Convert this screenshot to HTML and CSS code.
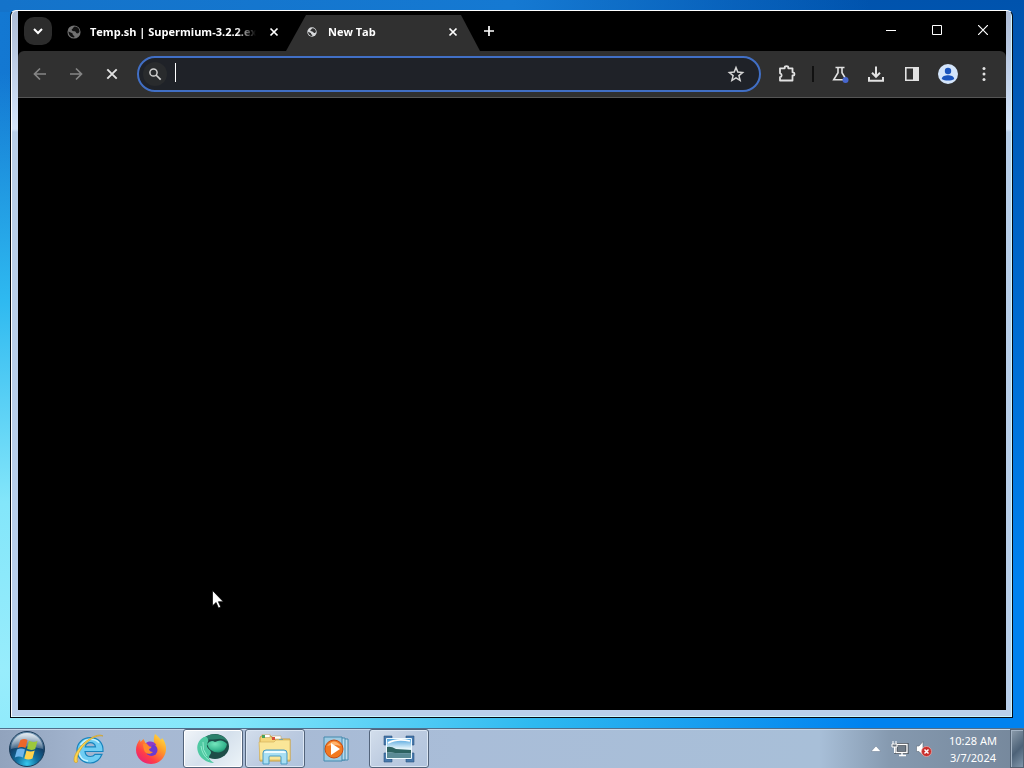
FILE: index.html
```html
<!DOCTYPE html>
<html lang="en">
<head>
  <meta charset="UTF-8">
  <meta name="viewport" content="width=device-width, initial-scale=1.0">
  <title>New Tab</title>
  <link rel="stylesheet" href="styles.css">
</head>
<body>
<main class="desktop">
  <div class="window">
    <div class="browser">
      <!-- Tab strip -->
      <header class="titlebar">
        <button class="tab-search" aria-label="Search tabs">
          <svg width="12" height="12" viewBox="0 0 12 12"><path d="M2 4 6 8 10 4" fill="none" stroke="#fff" stroke-width="2"/></svg>
        </button>
        <div class="tab">
          <svg class="globe dim" width="14" height="14" viewBox="0 0 16 16"><circle cx="8" cy="8" r="7.500" fill="currentColor"/><path d="M9 1.800C7 2 7.500 4 6 4.500S5.500 7 8 7s2 2 3.500 2.500S14 8 14.300 7C14 4 12 2 9 1.800zM1.700 7.500 6 9.500c1 .5 0 2 1.500 2.500S8.500 14 8 14.300C4.500 14.200 1.800 11.500 1.700 7.500z" fill="#111"/></svg>
          <span class="tab-title">Temp.sh | Supermium-3.2.2.exe</span>
          <button class="tab-close" aria-label="Close tab"><svg width="10" height="10" viewBox="0 0 10 10"><path d="M1.500 1.500l7 7M8.500 1.500l-7 7" stroke="#fff" stroke-width="1.700"/></svg></button>
        </div>
        <div class="tab active">
          <svg class="globe small" width="10" height="10" viewBox="0 0 16 16"><circle cx="8" cy="8" r="7.500" fill="currentColor"/><path d="M9 1.800C7 2 7.500 4 6 4.500S5.500 7 8 7s2 2 3.500 2.500S14 8 14.300 7C14 4 12 2 9 1.800zM1.700 7.500 6 9.500c1 .5 0 2 1.500 2.500S8.500 14 8 14.300C4.500 14.200 1.800 11.500 1.700 7.500z" fill="#303030"/></svg>
          <span class="tab-title">New Tab</span>
          <button class="tab-close" aria-label="Close tab"><svg width="10" height="10" viewBox="0 0 10 10"><path d="M1.500 1.500l7 7M8.500 1.500l-7 7" stroke="#fff" stroke-width="1.700"/></svg></button>
        </div>
        <button class="new-tab" aria-label="New tab"><svg width="12" height="12" viewBox="0 0 12 12"><path d="M6 1v10M1 6h10" stroke="#fff" stroke-width="1.700"/></svg></button>
        <div class="window-controls">
          <button aria-label="Minimize"><svg width="10" height="11" viewBox="0 0 10 11"><path d="M0 5.500h10" stroke="#fff"/></svg></button>
          <button aria-label="Maximize"><svg width="10" height="10" viewBox="0 0 10 10"><path d="M.5.500h9v9h-9z" fill="none" stroke="#fff"/></svg></button>
          <button aria-label="Close"><svg width="10" height="10" viewBox="0 0 10 10"><path d="M0 0l10 10M10 0 0 10" stroke="#fff" stroke-width="1.200"/></svg></button>
        </div>
      </header>
      <!-- Toolbar -->
      <nav class="toolbar">
        <button class="tool dim" aria-label="Back"><svg width="16" height="16" viewBox="0 0 16 16"><path d="M14 8H3M8 2.500 2.500 8 8 13.500" fill="none" stroke="currentColor" stroke-width="1.700"/></svg></button>
        <button class="tool dim" aria-label="Forward"><svg width="16" height="16" viewBox="0 0 16 16"><path d="M2 8h11M8 2.500 13.500 8 8 13.500" fill="none" stroke="currentColor" stroke-width="1.700"/></svg></button>
        <button class="tool" aria-label="Stop"><svg width="16" height="16" viewBox="0 0 16 16"><path d="M3.300 3.300l9.400 9.400M12.700 3.300l-9.400 9.400" stroke="currentColor" stroke-width="1.900"/></svg></button>
        <div class="omnibox">
          <span class="search-chip"><svg width="14" height="14" viewBox="0 0 14 14"><circle cx="5.500" cy="5.500" r="3.600" fill="none" stroke="#d0d0d0" stroke-width="1.500"/><path d="M8 8l4.700 4.700" stroke="#d0d0d0" stroke-width="1.700"/></svg></span>
          <span class="caret"></span>
          <input class="address" type="text" aria-label="Address and search bar">
          <button class="star" aria-label="Bookmark this tab"><svg width="18" height="18" viewBox="0 0 18 18"><path d="M9 2.600l1.800 4.500 4.800.4-3.700 3.100 1.200 4.700L9 12.800l-4.100 2.500 1.200-4.700-3.700-3.100 4.800-.4z" fill="none" stroke="#d6d6d6" stroke-width="1.500"/></svg></button>
        </div>
        <button class="tool" aria-label="Extensions"><svg width="20" height="20" viewBox="0 0 20 20"><path d="M3 4.300h4.700v-.8a1.800 1.300 0 0 1 3.600 0v.8h4.200v4h.5a1.500 1.600 0 0 1 0 3.200h-.5v5H3v-3.300c2.200-.4 2.200-3.500 0-3.900z" fill="none" stroke="currentColor" stroke-width="1.800" stroke-linejoin="round"/></svg></button>
        <span class="divider"></span>
        <button class="tool" aria-label="Experiments"><svg width="20" height="20" viewBox="0 0 20 20"><path d="M5.500 3.500h9M8 3.500v5.200L3.700 15.800h12.600L12 8.700V3.500" fill="none" stroke="currentColor" stroke-width="1.600"/><circle cx="15.500" cy="16" r="3" fill="#4767cf"/></svg></button>
        <button class="tool" aria-label="Downloads"><svg width="18" height="18" viewBox="0 0 18 18"><path d="M9 1.500v10M5 7.800l4 4 4-4M2 12v3.800h14V12" fill="none" stroke="currentColor" stroke-width="2"/></svg></button>
        <button class="tool" aria-label="Side panel"><svg width="16" height="16" viewBox="0 0 16 16"><path d="M1.800 1.800h12.400v12.400H1.800z" fill="none" stroke="currentColor" stroke-width="1.600"/><path d="M9 1.500h5.500v13H9z" fill="currentColor"/></svg></button>
        <button class="tool" aria-label="Profile"><svg width="20" height="20" viewBox="0 0 20 20"><circle cx="10" cy="10" r="10" fill="#d4e5fb"/><circle cx="10" cy="7" r="3.200" fill="#1b55bd"/><path d="M3.800 15c0-3 3.700-3.800 6.200-3.800s6.200.8 6.200 3.800c-3 2-9.400 2-12.400 0z" fill="#1b55bd"/></svg></button>
        <button class="tool" aria-label="Menu"><svg width="16" height="16" viewBox="0 0 16 16"><g fill="currentColor"><circle cx="8" cy="2.500" r="1.500"/><circle cx="8" cy="8" r="1.500"/><circle cx="8" cy="13.500" r="1.500"/></g></svg></button>
      </nav>
      <div class="page"></div>
    </div>
  </div>
  <svg class="cursor" width="12" height="19" viewBox="0 0 12 19"><path d="M.5.500v15.300l3.600-3.300 2.400 5.600 2.300-1-2.400-5.400h4.900z" fill="#fff" stroke="#000" stroke-width=".7"/></svg>
</main>

<footer class="taskbar">
  <button class="start" aria-label="Start">
    <svg width="38" height="38" viewBox="0 0 38 38">
      <defs>
        <radialGradient id="orb" cx=".5" cy=".92" r=".85"><stop offset="0" stop-color="#35c8ee"/><stop offset=".35" stop-color="#12709f"/><stop offset=".7" stop-color="#123f68"/><stop offset="1" stop-color="#7296b4"/></radialGradient>
        <linearGradient id="gloss" x2="0" y2="1"><stop offset="0" stop-color="#fff" stop-opacity=".8"/><stop offset="1" stop-color="#fff" stop-opacity=".2"/></linearGradient>
      </defs>
      <circle cx="19" cy="19" r="17.500" fill="url(#orb)" stroke="#1b3c59"/>
      <path d="M3 19a16 16 0 0 1 32 0q-16-5-32 0z" fill="url(#gloss)"/>
      <path d="M12.500 10q4-2 7 0l-2 8q-4-2-8 0z" fill="#ed672a"/>
      <path d="M21 10.800q4 2.200 8.500.2l-2.300 8q-4 2-8.200-.2z" fill="#9cc83c"/>
      <path d="M9 19.600q4-2 8 0l-2.200 8q-3.500-2-8-.2z" fill="#6eb5eb"/>
      <path d="M18.500 20.400q4 2.200 8.200.2l-2.200 8q-4.500 2-8.200-.2z" fill="#ffd34c"/>
    </svg>
  </button>
  <button class="task" aria-label="Internet Explorer">
    <svg width="32" height="32" viewBox="0 0 32 32">
      <path d="M30 18.500H12c.3 3.400 2.500 5 5.300 5 2 0 3.700-.8 4.700-2.200h7C27 26.500 22.500 30 17.200 30 10 30 4 24.800 4 17.300S10 4.700 17.300 4.700C25.500 4.700 30.500 10 30 18.500zM22.500 13.800c-.5-2.500-2.400-4.100-5-4.100s-4.700 1.600-5.200 4.100z" fill="#6fcdf3" stroke="#1784be" stroke-width="1.200"/>
      <path d="M7.500 12q4-5.500 10-5.700 5-.2 8.500 3.500M6 19q1 8 9 9" stroke="#c5f2ff" fill="none" stroke-width="1.500"/>
      <path d="M1.500 29C-1 24.500 6 12 17 5.500 22 2.500 27 1 30 3c-5-.8-9 1.200-13 4C9 12.500 2.500 23 4.500 29q-1.600 1.200-3 0z" fill="#ffd44c" stroke="#cb9b21" stroke-width=".6"/>
    </svg>
  </button>
  <button class="task" aria-label="Firefox">
    <svg width="32" height="32" viewBox="0 0 32 32">
      <defs><linearGradient id="fox" x1="1" y1="0" x2=".2" y2="1"><stop offset="0" stop-color="#fff04a"/><stop offset=".4" stop-color="#ff9c28"/><stop offset=".75" stop-color="#ff3d48"/><stop offset="1" stop-color="#e5207e"/></linearGradient></defs>
      <path d="M20 1c4 3 5 5 6 6l1-2c3 3 4.500 8 4 12-.8 8-7 14-15 14S1 25 1 17c0-4 1.500-8 4-10.500L5.500 9l3-3 2 4h5l4 2c-1-4-1-8 .5-11z" fill="url(#fox)"/>
      <circle cx="16.500" cy="17" r="6" fill="#6b3ad2"/>
      <path d="M8 11c3-1 6 0 8 2 1 1 0 2.500-2 3 0 2 2 3 4 3-3 3-8 2-9-2-.5-2-1-4-1-6z" fill="#ff8a2b"/>
      <path d="M11 10c4-3 9-1 10.500 2.500-2-.8-4-.5-5 .5s-2 1-3.500-1z" fill="#8f3bc6"/>
    </svg>
  </button>
  <button class="task open focused" aria-label="Supermium">
    <svg width="34" height="34" viewBox="0 0 34 34">
      <defs><radialGradient id="sup" cx=".4" cy=".3" r=".75"><stop offset="0" stop-color="#75e6bd"/><stop offset=".7" stop-color="#35b68e"/><stop offset="1" stop-color="#1d8a6b"/></radialGradient></defs>
      <ellipse cx="19" cy="14.500" rx="14" ry="12.500" fill="#1d4d48"/>
      <path d="M5 8C13-1 28 1 32 10q-5-4-10-3C15 8 9 7 5 8z" fill="#2b806b"/>
      <path d="M11 12q4-5 8-2 7-4 12 2-1 7-8 8.500Q14 21 11 12z" fill="url(#sup)"/>
      <path d="M8 5C2 8 0 14 2 20c2 6 8 10.500 16 11-3-2-5-3.500-5-6 0-2 2-2.500 2-4.500 0-3-5-4-4-8 .6-2.500 2-3.500 1-5.500Q11 4 8 5z" fill="#4fc9a2"/>
      <path d="M5 14q1 9 8 14M7 10q-1 8 4 14" fill="none" stroke="#a4f2d8" stroke-width=".8"/>
    </svg>
  </button>
  <button class="task open" aria-label="Windows Explorer">
    <svg width="34" height="32" viewBox="0 0 34 32">
      <path d="M2 5q0-2 2-2h9l2 3h17v22H2z" fill="#f4d67b" stroke="#c99f43"/>
      <path d="M4 1.500h8v3H4zM14 3h9v3h-9z" fill="#fff" stroke="#b99b55" stroke-width=".5"/>
      <path d="M4 2h3v3H4z" fill="#49a35b"/><path d="M14 4h3v3h-3z" fill="#d6503b"/><path d="M21 6h4v3h-4z" fill="#4b9dc9"/>
      <path d="M1 9h15l2-2h14v20H2z" fill="#fae698" stroke="#d4b25b" stroke-width=".7"/>
      <path d="M5 31V20q0-3 3-3h18q3 0 3 3v11h-6v-7q0-1-1-1H12q-1 0-1 1v7z" fill="#a9dff3" stroke="#499bc3"/>
      <path d="M7 20q0-1 1.500-1h17q1.500 0 1.500 1" fill="none" stroke="#effcff" stroke-width="2"/>
    </svg>
  </button>
  <button class="task" aria-label="Windows Media Player">
    <svg width="32" height="28" viewBox="0 0 32 28">
      <path d="M9 4h18v21H9z" fill="#c3deee" stroke="#4589ad"/>
      <path d="M6 3h18v22H6z" fill="#b6dbef" stroke="#4589ad"/>
      <path d="M3 2h18v24H3z" fill="#9dcbe3" stroke="#4589ad"/>
      <circle cx="13" cy="14" r="9" fill="#f27920" stroke="#c94b10"/>
      <path d="M6 11q7-9 14 0-7-2-14 0z" fill="#ffb36e"/>
      <path d="M10 8v12l9-6z" fill="#fff"/>
    </svg>
  </button>
  <button class="task open" aria-label="Photo Viewer">
    <svg width="32" height="28" viewBox="0 0 32 28">
      <defs><linearGradient id="sky" x2="0" y2="1"><stop offset="0" stop-color="#489fdb"/><stop offset=".5" stop-color="#e3f4fb"/><stop offset="1" stop-color="#8bbbd2"/></linearGradient></defs>
      <path d="M1 1h8v3H4v6H1zM23 1h8v9h-3V4h-5zM1 18h3v6h5v3H1zM28 18h3v9h-8v-3h5z" fill="#4778ac" stroke="#2d547f" stroke-width=".6"/>
      <path d="M3.500 3.500h25v20h-25z" fill="url(#sky)" stroke="#eefaff"/>
      <path d="M4 12q4-1 9 2l15 1v3q-12 1-24-1z" fill="#2d6261"/>
      <path d="M4 17q12 2 24 1v5H4z" fill="#5b8b96"/>
      <path d="M5 8q9-5 22-2" fill="none" stroke="#fff" stroke-width="1.500"/>
    </svg>
  </button>
  <div class="tray">
    <button aria-label="Show hidden icons"><svg width="10" height="6" viewBox="0 0 10 6"><path d="M5 0l5 5.500H0z" fill="#fff" stroke="#65778e" stroke-width=".5"/></svg></button>
    <button aria-label="Network">
      <svg width="18" height="18" viewBox="0 0 18 18"><path d="M5 4.500h11v8H5z" fill="#707c89" stroke="#3c454f" stroke-width="3"/><path d="M5 4.500h11v8H5zM8 15.500h7M11 13v2" fill="none" stroke="#fff" stroke-width="1.400"/><path d="M2 1v3M5 1v3M1 4h5v3H1zM3.500 7v6" fill="#68727d" stroke="#fff"/></svg>
    </button>
    <button aria-label="Volume muted">
      <svg width="18" height="18" viewBox="0 0 18 18"><path d="M1.500 6H4l4-4.500v14L4 11.500H1.500z" fill="#fff" stroke="#5e6c7b" stroke-width=".6"/><circle cx="11.500" cy="11.500" r="5" fill="#c92e2b" stroke="#f0aaa7" stroke-width=".7"/><path d="M9.500 9.500l4 4M13.500 9.500l-4 4" stroke="#fff" stroke-width="1.500"/></svg>
    </button>
  </div>
  <time class="clock" datetime="2024-03-07T10:28"><span>10:28 AM</span><span>3/7/2024</span></time>
  <button class="show-desktop" aria-label="Show desktop"></button>
</footer>
</body>
</html>
```
FILE: styles.css
```css
* { box-sizing: border-box; }
body {
  margin: 0;
  height: 100vh;
  display: flex;
  flex-direction: column;
  overflow: hidden;
  font-family: "Noto Sans", "Open Sans", sans-serif;
  font-size: 12px;
}
button {
  display: flex;
  align-items: center;
  justify-content: center;
  padding: 0;
  border: 0;
  background: none;
  color: inherit;
}
.desktop {
  position: relative;
  flex: 1;
  min-height: 0;
  display: flex;
  padding: 10px 11px 10px 10px;
  background:
    radial-gradient(ellipse 85% 82% at 0 92%, #98edfc 0, #83e6fa 28%, #2eb9f0 62%, transparent 100%),
    linear-gradient(90deg, #1473ca 0, #1579d2 50%, transparent 85%) top / 100% 12px no-repeat,
    linear-gradient(90deg, #1378d2, transparent 60%),
    linear-gradient(#0053ad, #0069cd 40%, #0082ef 80%);
}
.window {
  flex: 1;
  display: flex;
  padding: 0 6px 7px;
  border: 1px solid #050b14;
  border-top-color: #fff;
  border-radius: 6px 6px 0 0;
  box-shadow: inset 1px 0 #fff, inset -1px -1px #c9f4ff;
  background: linear-gradient(#adbcd6 0, #d3e4fa 118px, #b8cfea 121px, #b9cfeb 100%);
}
.browser {
  flex: 1;
  min-width: 0;
  display: flex;
  flex-direction: column;
  margin-left: 1px;
  background: #000;
}

/* tab strip */
.titlebar {
  display: flex;
  align-items: center;
  height: 40px;
  padding-left: 6px;
  color: #fff;
}
.tab-search {
  width: 28px;
  height: 28px;
  border-radius: 10px;
  background: #2c2c2c;
}
.tab {
  display: flex;
  align-items: center;
  width: 234px;
  height: 36px;
  padding: 0 3px 3px 15px;
  align-self: flex-end;
}
.tab.active {
  width: 194px;
  padding: 0 18px 3px 21px;
  background: #303030;
  clip-path: polygon(20px 0, 175px 0, 100% 100%, 0 100%);
}
.globe { flex: none; margin-right: 9px; color: #d8dadc; }
.globe.dim { color: #727272; }
.globe.small { margin-right: 11px; }
.tab-title {
  flex: 1;
  overflow: hidden;
  white-space: nowrap;
  font-family: "Open Sans", "Noto Sans", sans-serif;
  font-size: 11px;
  font-weight: 700;
  line-height: 16px;
  mask-image: linear-gradient(90deg, #000 88%, transparent);
}
.tab-close { width: 18px; height: 18px; margin-left: 9px; }
.new-tab { width: 18px; height: 28px; }
.window-controls { display: flex; margin-left: auto; }
.window-controls button { width: 46px; height: 40px; padding-bottom: 2px; }

/* toolbar */
.toolbar {
  display: flex;
  align-items: center;
  gap: 4px;
  height: 47px;
  padding: 0 6px;
  border-bottom: 1px solid #555;
  border-radius: 6px 6px 0 0;
  background: #303030;
  color: #e2e2e2;
}
.tool { flex: none; width: 32px; height: 32px; }
.tool.dim { color: #858585; }
.omnibox {
  flex: 1;
  min-width: 0;
  display: flex;
  align-items: center;
  height: 36px;
  margin: 0 6px 0 5px;
  padding: 0 14px 0 4px;
  border: 2px solid #416fc5;
  border-radius: 18px;
  background: #1f2228;
}
.search-chip {
  display: flex;
  align-items: center;
  justify-content: center;
  width: 24px;
  height: 24px;
  border-radius: 12px;
  background: #292b2d;
}
.caret { width: 1px; height: 19px; margin: 0 0 3px 8px; background: #fff; }
.address {
  flex: 1;
  min-width: 0;
  height: 24px;
  padding: 0;
  border: 0;
  outline: 0;
  background: none;
  color: #fff;
  font: inherit;
}
.divider { width: 2px; height: 16px; margin: 0 6px 0 5px; background: #111; }
.page { flex: 1; background: #000; }
.cursor { position: absolute; left: 212px; top: 590px; }

/* taskbar */
.taskbar {
  display: flex;
  align-items: stretch;
  gap: 2px;
  height: 40px;
  border-top: 1px solid #506e8b;
  box-shadow: inset 0 1px #c8d8e9;
  background: linear-gradient(90deg, #91a3bd 0, #a6b8d2 10%, #a9bdd8 45%, #a8bfd8 80%, #8599af 87%, #75879b 100%);
}
.start { width: 54px; margin-right: 3px; }
.task { width: 60px; border: 1px solid transparent; border-radius: 3px; }
.task.open {
  border-color: #53647b;
  background: linear-gradient(135deg, #d3deec, #bccbe0 50%, #b0c3dd);
  box-shadow: inset 0 0 0 1px #dce7f4;
}
.task.focused {
  background: linear-gradient(135deg, #f1f5f9, #d4e0ec 50%, #edf4f8);
  box-shadow: inset 0 0 0 1px #fff;
}
.tray { display: flex; align-items: center; margin-left: auto; }
.tray button { width: 24px; height: 40px; }
.clock {
  display: flex;
  flex-direction: column;
  justify-content: center;
  width: 70px;
  text-align: center;
  color: #fff;
  font-size: 11px;
  line-height: 17px;
}
.show-desktop {
  width: 14px;
  border: 1px solid #536273;
  box-shadow: inset 1px 1px #a3b3c4;
  background: linear-gradient(135deg, #8d9dac, #4d6278 55%, #8196aa);
}
```
